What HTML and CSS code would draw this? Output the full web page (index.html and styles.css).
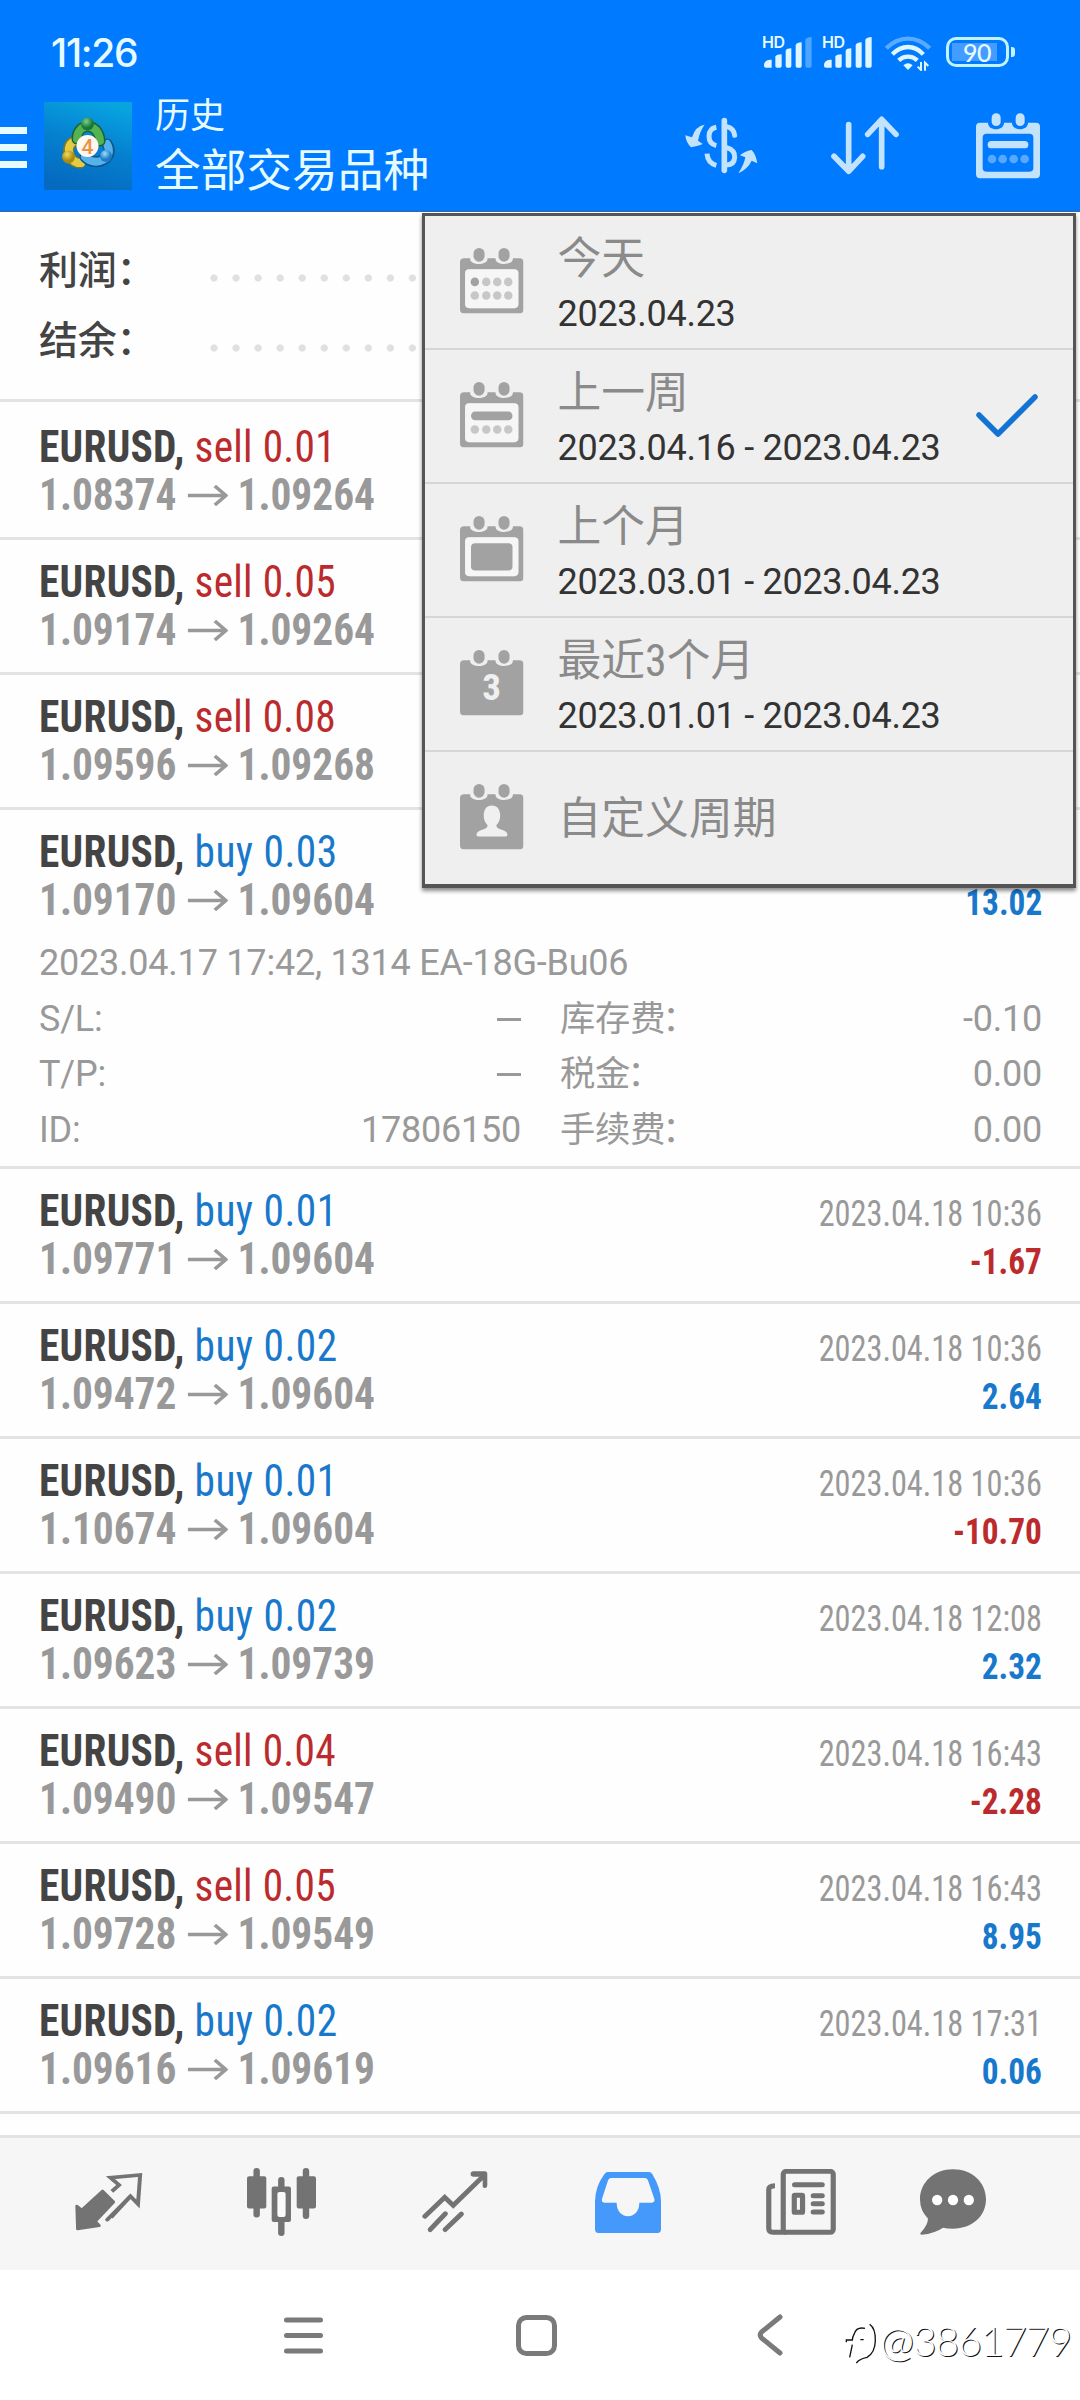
FILE: index.html
```
<!DOCTYPE html>
<html lang="zh-CN">
<head>
<meta charset="utf-8">
<title>历史</title>
<link rel="stylesheet" href="styles.css">
</head>
<body>
<svg class="defs" aria-hidden="true">
  <defs>
    <symbol id="arrow" viewBox="0 0 40 24" preserveAspectRatio="none"><path d="M0 12H37M27 2L38 12L27 22" fill="none" stroke="#999" stroke-width="3.6"/></symbol>
    <symbol id="cal-frame" viewBox="95 143 150 197" preserveAspectRatio="none">
      <path fill-rule="evenodd" d="M105 174H119V176C119 196 160 196 160 176V174H179V176C179 196 220 196 220 176V174H235Q245 174 245 186V327Q245 340 235 340H105Q95 340 95 327V186Q95 174 105 174ZM117 207Q107 207 107 219V311Q107 324 117 324H223Q233 324 233 311V219Q233 207 223 207Z"/>
      <rect x="127" y="143" width="26" height="41" rx="13" ry="16"/><rect x="186" y="143" width="26" height="41" rx="13" ry="16"/>
    </symbol>
    <symbol id="cal-solid" viewBox="95 143 150 197" preserveAspectRatio="none">
      <path d="M105 174H119V176C119 196 160 196 160 176V174H179V176C179 196 220 196 220 176V174H235Q245 174 245 186V327Q245 340 235 340H105Q95 340 95 327V186Q95 174 105 174Z"/>
      <rect x="127" y="143" width="26" height="41" rx="13" ry="16"/><rect x="186" y="143" width="26" height="41" rx="13" ry="16"/>
    </symbol>
  </defs>
</svg>

<header class="header">
  <div class="status">
    <span class="clock">11:26</span>
    <div class="status-icons">
      <div class="signal"><span class="hd">HD</span>
        <svg width="48" height="32" viewBox="372 109 144 96"><g fill="#dff6ff"><path d="M372 196Q372 182 390 180H395V204H378Q372 204 372 199ZM406 170Q410 164 425 164V199Q425 204 420 204H411Q406 204 406 199ZM437 153Q440 146 454 146V199Q454 204 449 204H442Q437 204 437 199ZM467 136Q470 128 485 128V199Q485 204 480 204H472Q467 204 467 199Z"/><path opacity=".35" d="M496 120Q500 112 515 112V199Q515 204 510 204H501Q496 204 496 199Z"/></g></svg>
      </div>
      <div class="signal"><span class="hd">HD</span>
        <svg width="48" height="32" viewBox="372 109 144 96"><path fill="#dff6ff" d="M372 196Q372 182 390 180H395V204H378Q372 204 372 199ZM406 170Q410 164 425 164V199Q425 204 420 204H411Q406 204 406 199ZM437 153Q440 146 454 146V199Q454 204 449 204H442Q437 204 437 199ZM467 136Q470 128 485 128V199Q485 204 480 204H472Q467 204 467 199ZM496 120Q500 112 515 112V199Q515 204 510 204H501Q496 204 496 199Z"/></svg>
      </div>
      <svg class="wifi" width="46" height="35" viewBox="735 106 138 105"><g fill="none" stroke="#dff6ff" stroke-width="13"><path opacity=".4" d="M739 143Q768 114 804 114T869 143"/><path d="M757 161Q778 139 804 139T850 161"/><path d="M776 179Q788 168 804 168T832 179"/></g><path fill="#dff6ff" d="M790 194Q804 182 818 194L804 208Z"/><path d="M843 184V208L833 198M855 210V186L865 196" fill="none" stroke="#dff6ff" stroke-width="6"/></svg>
      <div class="battery"><span class="level">90</span><i class="nub"></i></div>
    </div>
  </div>
  <div class="toolbar">
    <div class="menu"><i></i><i></i><i></i></div>
    <svg class="logo" width="88" height="88" viewBox="0 0 88 88">
      <defs>
        <linearGradient id="bg" x1=".7" y1="0" x2=".4" y2="1"><stop offset="0" stop-color="#08a4e0"/><stop offset=".5" stop-color="#0580d0"/><stop offset="1" stop-color="#056ac0"/></linearGradient>
        <radialGradient id="gr" cx=".4" cy=".3"><stop offset="0" stop-color="#7fd08a"/><stop offset="1" stop-color="#157a35"/></radialGradient>
        <radialGradient id="ye" cx=".4" cy=".3"><stop offset="0" stop-color="#f3dd5a"/><stop offset="1" stop-color="#a88912"/></radialGradient>
        <radialGradient id="bl" cx=".4" cy=".3"><stop offset="0" stop-color="#9ddcff"/><stop offset="1" stop-color="#1c7cc4"/></radialGradient>
      </defs>
      <rect width="88" height="88" fill="url(#bg)"/>
      <g fill="none" stroke-linecap="round">
        <path d="M36 61C22 61 20 38 34 39" stroke="#7d7b22" stroke-width="11"/><path d="M37 61C23 62 20 38 34 39" stroke="#e3cb45" stroke-width="8"/>
        <path d="M63 42C72 56 52 66 41 55" stroke="#0d5791" stroke-width="11"/><path d="M63 42C71 56 52 66 41 55" stroke="#58b2ea" stroke-width="8"/>
        <path d="M33 37C33 20 55 20 56 39" stroke="#176236" stroke-width="11"/><path d="M33 37C33 20 55 20 56 39" stroke="#54b250" stroke-width="8"/>
      </g>
      <circle cx="43.500" cy="22" r="6.500" fill="url(#gr)"/><circle cx="24.500" cy="55" r="6.500" fill="url(#ye)"/><circle cx="62" cy="54" r="6" fill="url(#bl)"/>
      <circle cx="43.500" cy="44" r="11" fill="#fff7f0"/>
      <text x="43.500" y="51.500" text-anchor="middle" class="four">4</text>
    </svg>
    <div class="titles"><div class="sub">历史</div><div class="main">全部交易品种</div></div>
    <div class="actions">
      <svg width="73" height="57" viewBox="137 347 219 171">
        <g fill="none" stroke="#c3e2fb" stroke-linecap="round"><path stroke-width="17" d="M255 358V507"/><path stroke-width="15" d="M262 376Q283 380 286 402M262 439Q287 446 286 468T262 491"/><path stroke-linecap="butt" stroke-width="15" d="M231 378Q209 382 209 405T231 433M231 492Q205 485 203 457"/></g>
        <path fill="#c3e2fb" d="M196 370Q168 374 158 408L138 402Q140 424 155 438Q178 434 190 428L176 418Q182 388 196 370ZM297 516Q326 502 337 478L354 486Q350 460 337 446Q315 450 302 462L318 468Q314 490 297 516Z"/>
      </svg>
      <svg width="68" height="59" viewBox="573 348 204 177"><path d="M626 374V512M582 469L626 514L668 469M725 500V360M683 403L725 358L768 403" fill="none" stroke="#c3e2fb" stroke-width="17" stroke-linecap="round" stroke-linejoin="round"/></svg>
      <svg width="64" height="66" viewBox="1008 337 192 198"><g fill="#c3e2fb"><path fill-rule="evenodd" d="M1020 366H1044C1044 392 1092 392 1092 366H1116C1116 392 1164 392 1164 366H1188Q1200 366 1200 378V521Q1200 533 1188 533H1020Q1008 533 1008 521V378Q1008 366 1020 366ZM1040 399Q1028 399 1028 411V501Q1028 513 1040 513H1168Q1180 513 1180 501V411Q1180 399 1168 399Z"/><rect x="1055" y="338" width="27" height="38" rx="13"/><rect x="1127" y="338" width="27" height="38" rx="13"/><rect x="1043" y="421" width="122" height="22" rx="11"/><g opacity=".45"><circle cx="1056" cy="475" r="13"/><circle cx="1088" cy="475" r="13"/><circle cx="1121" cy="475" r="13"/><circle cx="1154" cy="475" r="13"/></g></g></svg>
    </div>
  </div>
</header>

<main class="content">
  <section class="summary">
    <div class="sum-row"><span>利润：</span><i class="dots"></i></div>
    <div class="sum-row"><span>结余：</span><i class="dots"></i></div>
  </section>

  <section class="deals">
    <article class="deal first"><div class="left"><div class="sym"><b>EURUSD,</b> <span class="sell">sell 0.01</span></div><div class="price">1.08374<svg><use href="#arrow"/></svg>1.09264</div></div></article>
    <article class="deal"><div class="left"><div class="sym"><b>EURUSD,</b> <span class="sell">sell 0.05</span></div><div class="price">1.09174<svg><use href="#arrow"/></svg>1.09264</div></div></article>
    <article class="deal"><div class="left"><div class="sym"><b>EURUSD,</b> <span class="sell">sell 0.08</span></div><div class="price">1.09596<svg><use href="#arrow"/></svg>1.09268</div></div></article>
    <article class="deal open">
      <div class="left"><div class="sym"><b>EURUSD,</b> <span class="buy">buy 0.03</span></div><div class="price">1.09170<svg><use href="#arrow"/></svg>1.09604</div></div>
      <div class="right"><div class="time">&nbsp;</div><div class="profit buy">13.02</div></div>
      <div class="detail">
        <div class="comment">2023.04.17 17:42, 1314 EA-18G-Bu06</div>
        <div class="pair"><span>S/L:</span><i class="dash"></i></div><div class="pair"><span class="label">库存费<span class="colon">：</span></span><span>-0.10</span></div>
        <div class="pair"><span>T/P:</span><i class="dash"></i></div><div class="pair"><span class="label">税金<span class="colon">：</span></span><span>0.00</span></div>
        <div class="pair"><span>ID:</span><span>17806150</span></div><div class="pair"><span class="label">手续费<span class="colon">：</span></span><span>0.00</span></div>
      </div>
    </article>
    <article class="deal"><div class="left"><div class="sym"><b>EURUSD,</b> <span class="buy">buy 0.01</span></div><div class="price">1.09771<svg><use href="#arrow"/></svg>1.09604</div></div><div class="right"><div class="time">2023.04.18 10:36</div><div class="profit sell">-1.67</div></div></article>
    <article class="deal"><div class="left"><div class="sym"><b>EURUSD,</b> <span class="buy">buy 0.02</span></div><div class="price">1.09472<svg><use href="#arrow"/></svg>1.09604</div></div><div class="right"><div class="time">2023.04.18 10:36</div><div class="profit buy">2.64</div></div></article>
    <article class="deal"><div class="left"><div class="sym"><b>EURUSD,</b> <span class="buy">buy 0.01</span></div><div class="price">1.10674<svg><use href="#arrow"/></svg>1.09604</div></div><div class="right"><div class="time">2023.04.18 10:36</div><div class="profit sell">-10.70</div></div></article>
    <article class="deal"><div class="left"><div class="sym"><b>EURUSD,</b> <span class="buy">buy 0.02</span></div><div class="price">1.09623<svg><use href="#arrow"/></svg>1.09739</div></div><div class="right"><div class="time">2023.04.18 12:08</div><div class="profit buy">2.32</div></div></article>
    <article class="deal"><div class="left"><div class="sym"><b>EURUSD,</b> <span class="sell">sell 0.04</span></div><div class="price">1.09490<svg><use href="#arrow"/></svg>1.09547</div></div><div class="right"><div class="time">2023.04.18 16:43</div><div class="profit sell">-2.28</div></div></article>
    <article class="deal"><div class="left"><div class="sym"><b>EURUSD,</b> <span class="sell">sell 0.05</span></div><div class="price">1.09728<svg><use href="#arrow"/></svg>1.09549</div></div><div class="right"><div class="time">2023.04.18 16:43</div><div class="profit buy">8.95</div></div></article>
    <article class="deal"><div class="left"><div class="sym"><b>EURUSD,</b> <span class="buy">buy 0.02</span></div><div class="price">1.09616<svg><use href="#arrow"/></svg>1.09619</div></div><div class="right"><div class="time">2023.04.18 17:31</div><div class="profit buy">0.06</div></div></article>
  </section>

  <div class="popup">
    <div class="option">
      <svg class="cal" viewBox="95 143 150 197" preserveAspectRatio="none"><use href="#cal-frame" x="95" y="143" width="150" height="197"/><rect x="107" y="207" width="126" height="117" rx="10" ry="12" class="page"/><ellipse cx="130" cy="245" rx="10" ry="13"/><g opacity=".55"><ellipse cx="157" cy="245" rx="10" ry="13"/><ellipse cx="183" cy="245" rx="10" ry="13"/><ellipse cx="209" cy="245" rx="10" ry="13"/><ellipse cx="130" cy="286" rx="10" ry="13"/><ellipse cx="157" cy="286" rx="10" ry="13"/><ellipse cx="183" cy="286" rx="10" ry="13"/><ellipse cx="209" cy="286" rx="10" ry="13"/></g></svg>
      <div class="opt-text"><div class="name">今天</div><div class="range">2023.04.23</div></div>
    </div>
    <div class="option">
      <svg class="cal" viewBox="95 143 150 197" preserveAspectRatio="none"><use href="#cal-frame" x="95" y="143" width="150" height="197"/><rect x="107" y="207" width="126" height="117" rx="10" ry="12" class="page"/><rect x="121" y="232" width="98" height="26" rx="10" ry="13"/><g opacity=".55"><ellipse cx="130" cy="286" rx="10" ry="13"/><ellipse cx="157" cy="286" rx="10" ry="13"/><ellipse cx="183" cy="286" rx="10" ry="13"/><ellipse cx="209" cy="286" rx="10" ry="13"/></g></svg>
      <div class="opt-text"><div class="name">上一周</div><div class="range">2023.04.16 - 2023.04.23</div></div>
      <svg class="check" viewBox="0 0 62 44"><path d="M3 21L22 40L59 3" fill="none" stroke="#1273d4" stroke-width="5.500" stroke-linecap="round" stroke-linejoin="round"/></svg>
    </div>
    <div class="option">
      <svg class="cal" viewBox="95 143 150 197" preserveAspectRatio="none"><use href="#cal-frame" x="95" y="143" width="150" height="197"/><rect x="107" y="207" width="126" height="117" rx="10" ry="12" class="page"/><rect x="121" y="225" width="98" height="82" rx="10" ry="12"/></svg>
      <div class="opt-text"><div class="name">上个月</div><div class="range">2023.03.01 - 2023.04.23</div></div>
    </div>
    <div class="option">
      <svg class="cal" viewBox="0 0 63.5 65.5"><use href="#cal-solid" width="63.5" height="65.5"/><text x="31.7" y="50" text-anchor="middle" class="three">3</text></svg>
      <div class="opt-text"><div class="name">最近3个月</div><div class="range">2023.01.01 - 2023.04.23</div></div>
    </div>
    <div class="option">
      <svg class="cal" viewBox="95 143 150 197" preserveAspectRatio="none"><use href="#cal-solid" x="95" y="143" width="150" height="197"/><path fill="#f0f0f0" d="M170 208C183 208 190 220 190 240Q189 258 181 266Q180 276 192 280Q206 285 207 294V296Q207 301 203 301H138Q134 301 134 296V294Q135 285 149 280Q161 276 160 266Q152 258 151 240C151 220 158 208 170 208Z"/></svg>
      <div class="opt-text"><div class="name">自定义周期</div></div>
    </div>
  </div>
</main>

<nav class="tabs">
  <div><svg width="68" height="60" viewBox="209 218 190 180" preserveAspectRatio="none"><path fill="#737373" stroke="#737373" stroke-width="8" stroke-linejoin="round" d="M286 275L317 308L266 366L277 379L216 389L214 320L228 332Z"/><path fill="none" stroke="#737373" stroke-width="11" d="M312 276L332 257L308 235L391 227L385 314L364 291L310 354"/><path d="M364 291L299 361" stroke="#737373" stroke-width="11" stroke-linecap="round"/></svg></div>
  <div><svg width="69" height="68" viewBox="691 203 193 205" preserveAspectRatio="none"><g fill="#737373"><rect x="691" y="228" width="54" height="97" rx="6"/><rect x="709" y="203" width="18" height="149" rx="9"/><rect x="830" y="228" width="54" height="97" rx="6"/><rect x="847" y="203" width="18" height="154" rx="9"/><rect x="778" y="230" width="18" height="178" rx="9"/><rect x="760" y="259" width="54" height="107" rx="6"/></g><rect x="776" y="275" width="23" height="76" rx="6" fill="#fafafa"/></svg></div>
  <div><svg width="66" height="62" viewBox="1179 211 186 186" preserveAspectRatio="none"><g fill="none" stroke="#737373" stroke-width="14" stroke-linecap="round"><path d="M1187 347L1243 290L1267 314L1354 224"/><path d="M1202 387L1245 339M1244 387L1290 340"/></g><path fill="#737373" d="M1324 212H1356Q1363 212 1363 220V253Q1363 262 1356 262T1350 253V228H1324Q1316 228 1316 220T1324 212Z"/></svg></div>
  <div><svg width="66" height="61" viewBox="158 211 192 183" preserveAspectRatio="none"><path fill="#4499fb" fill-rule="evenodd" d="M195 211H315Q321 211 325 218Q350 260 350 300V383Q350 394 340 394H168Q158 394 158 383V300Q158 256 185 218Q190 211 195 211ZM205 229Q199 229 196 236L178 293Q177 303 185 303H221C221 357 287 357 287 303H323Q332 303 331 293L312 236Q309 229 303 229Z"/></svg></div>
  <div><svg width="70" height="66" viewBox="656 204 203 198" preserveAspectRatio="none"><g fill="none" stroke="#737373" stroke-width="15"><rect x="706" y="211" width="145" height="183" rx="9"/><path d="M682 254Q664 254 664 266V382Q664 394 676 394H714"/><g stroke-linecap="round"><path d="M739 251H819M793 284H819M793 308H819M793 333H819"/></g><rect x="738" y="283" width="24" height="51" rx="2"/></g></svg></div>
  <div><svg width="66" height="66" viewBox="1103 203 192 200" preserveAspectRatio="none"><path fill="#737373" d="M1199 204C1255 204 1295 244 1295 295S1255 384 1199 384Q1182 384 1170 381Q1145 399 1108 402Q1101 402 1105 396Q1127 372 1126 353Q1103 330 1103 295C1103 244 1144 204 1199 204Z"/><g fill="#fff"><ellipse cx="1153" cy="297" rx="15" ry="16"/><ellipse cx="1199" cy="297" rx="15" ry="16"/><ellipse cx="1245" cy="297" rx="15" ry="16"/></g></svg></div>
</nav>

<footer class="sysnav">
  <svg class="recent" viewBox="0 0 39 37"><path d="M2.5 3H36.500M2.500 18.500H36.500M2.500 34H36.500" stroke="#7a7a7a" stroke-width="5" stroke-linecap="round"/></svg>
  <svg class="home" viewBox="0 0 41 41"><rect x="2.500" y="2.500" width="36" height="36" rx="8" fill="none" stroke="#7a7a7a" stroke-width="5"/></svg>
  <svg class="back" viewBox="0 0 26 42"><path d="M23 3L4.500 18Q2 21 4.500 24L23 39" fill="none" stroke="#7a7a7a" stroke-width="5" stroke-linecap="round"/></svg>
  <div class="mark">
    <svg width="32" height="42" viewBox="12 40 96 126"><path fill="none" stroke="#111" stroke-width="4" d="M72 59Q46 54 40 75Q34 86 34 94H16V101M34 108L26 146M58 93H68"/><path fill="none" stroke="#111" stroke-width="4" d="M86 47Q104 60 103 96T78 146Q56 150 46 163"/></svg>
    <span>@3861779</span>
  </div>
</footer>
</body>
</html>
```
FILE: styles.css
```
* { box-sizing: border-box; }
body { margin: 0; width: 1080px; height: 2400px; display: flex; flex-direction: column; background: #fefefe; font-family: Roboto, "Noto Sans CJK SC", sans-serif; overflow: hidden; }
svg { display: block; flex: none; }
.defs { position: absolute; width: 0; height: 0; }
.deal { font-family: "Roboto Condensed", Roboto, sans-serif; }

.header { height: 212px; background: #007aff; border-bottom: 2px solid #1a6fd0; color: #e6fbff; flex: none; }
.status { height: 92px; padding: 0 65px 0 51px; display: flex; justify-content: space-between; align-items: flex-start; }
.clock { font: 500 39px/54px Inter, sans-serif; padding-top: 26px; letter-spacing: -1.3px; }
.status-icons { display: flex; align-items: flex-start; padding-top: 36px; }
.signal { position: relative; width: 50px; height: 32px; margin-right: 10px; padding-left: 2px; }
.hd { position: absolute; left: 0; top: 0; font: 600 16px/13px Inter, sans-serif; letter-spacing: -.5px; }
.wifi { margin-left: 3px; }
.battery { position: relative; width: 63px; height: 30px; margin: 1px 6px 0 15px; border: 3px solid #c2f3ff; border-radius: 10px; }
.level { position: absolute; left: 3px; top: 3px; width: 45px; height: 18px; background: #439cff; font: 500 25px/18px Lato, sans-serif; text-align: right; padding-right: 6px; letter-spacing: -.5px; }
.nub { position: absolute; right: -9px; top: 7px; width: 4px; height: 10px; background: #c2f3ff; border-radius: 0 3px 3px 0; }

.toolbar { height: 107px; display: flex; align-items: center; padding-right: 40px; }
.menu { width: 27px; display: flex; flex-direction: column; gap: 10px; margin: 4px 17px 0 0; }
.menu i { height: 7px; background: #e6fbff; }
.four { font: 500 21px Roboto, sans-serif; fill: #ea9347; }
.titles { margin: 3px 0 0 23px; flex: 1; }
.sub { font-size: 35px; line-height: 44px; height: 49px; }
.main { font-size: 45.7px; line-height: 56px; }
.actions { display: flex; align-items: center; gap: 73px; }
.actions svg:last-child { margin-left: 4px; }

.content { position: relative; flex: none; height: 1923px; }
.summary { height: 190px; padding: 24px 38px 0 39px; border-bottom: 3px solid #e3e3e3; color: #444; }
.sum-row { height: 70px; display: flex; font-size: 39px; line-height: 70px; font-weight: 500; }
.sum-row span { width: 171px; letter-spacing: -.3px; }
.dots { flex: 1; height: 8px; margin-top: 38px; background: radial-gradient(circle at 4px 4px, #e0e0e0 3.2px, transparent 4px) 0 0 / 22.05px 8px; }

.deal { display: flex; flex-wrap: wrap; justify-content: space-between; padding: 18px 38px 18px 39px; border-bottom: 3px solid #e3e3e3; line-height: 48px; font-size: 44px; }
.deal.first { padding-top: 21px; }
.deal.open { padding-bottom: 8px; }
.left { transform: scaleX(.94); transform-origin: left; }
.sym { color: #444; height: 48px; white-space: nowrap; letter-spacing: .3px; }
.sym .buy { letter-spacing: .5px; }
.price { display: flex; align-items: center; height: 48px; color: #999; font-weight: 700; }
.price svg { width: 43px; height: 23px; margin: 0 10px 0 12px; }
.sell { color: #bb2a2c; }
.buy { color: #1878cc; }
.right { text-align: right; font-size: 36px; line-height: 48px; padding-top: 3px; margin-bottom: -3px; }
.time { color: #999; height: 48px; transform: scaleX(.897); transform-origin: right; }
.profit { font-weight: 700; height: 48px; transform: scaleX(.925); transform-origin: right; }
.detail { width: 100%; margin-top: 12px; display: grid; grid-template-columns: 482px 482px; column-gap: 39px; grid-auto-rows: 55.5px; line-height: 55.5px; color: #999; font-family: Roboto, "Noto Sans CJK SC", sans-serif; font-size: 36px; letter-spacing: -.22px; }
.comment { grid-column: 1 / 3; }
.pair { display: flex; justify-content: space-between; align-items: center; }
.label { font-size: 35.3px; }
.colon { margin-left: -3px; }
.dash { width: 24px; height: 3px; background: #999; }

.popup { position: absolute; left: 422px; top: 1px; width: 654px; height: 675px; background: #efefef; border: 3px solid #555; border-bottom-width: 4px; box-shadow: 0 3px 4px rgba(0,0,0,.45); }
.option { height: 134px; padding-left: 35px; border-bottom: 2px solid #d6d6d6; display: flex; align-items: center; }
.option:last-child { height: 132px; border: 0; }
.cal { width: 63.5px; height: 65.5px; margin-top: -2px; fill: #a2a2a2; }
.page { fill: #fff; opacity: .45; }
.three { font: 700 37px "Roboto Condensed", sans-serif; fill: #f0f0f0; }
.opt-text { margin-left: 34px; padding-top: 5px; flex: 1; }
.option:last-child .opt-text { padding-top: 2px; }
.name { font-family: "Roboto Condensed", "Noto Sans CJK SC", sans-serif; font-size: 43.8px; line-height: 50px; color: #8a8a8a; }
.range { font-size: 36px; line-height: 44px; margin-top: 8px; letter-spacing: -.28px; color: #333; white-space: nowrap; }
.check { width: 62px; height: 44px; margin-right: 35px; }

.tabs { height: 135px; flex: none; background: #f6f6f6; border-top: 3px solid #e3e3e3; display: grid; grid-template-columns: repeat(5, 173px) 132px; padding-left: 22px; }
.tabs div { display: flex; justify-content: center; align-items: center; padding-bottom: 4px; }

.sysnav { flex: 1; display: flex; align-items: center; padding-left: 284px; background: #fff; }
.recent { width: 39px; height: 37px; margin-right: 193px; }
.home { width: 41px; height: 41px; margin-right: 200px; }
.back { width: 26px; height: 42px; }
.mark { margin: 16px 0 0 62px; display: flex; align-items: center; }
.mark span { margin: -4px 0 0 3px; font: 300 41px/50px Lato, sans-serif; color: #fff; text-shadow: 1px .5px 0 #111; white-space: nowrap; letter-spacing: -1.2px; }
```
